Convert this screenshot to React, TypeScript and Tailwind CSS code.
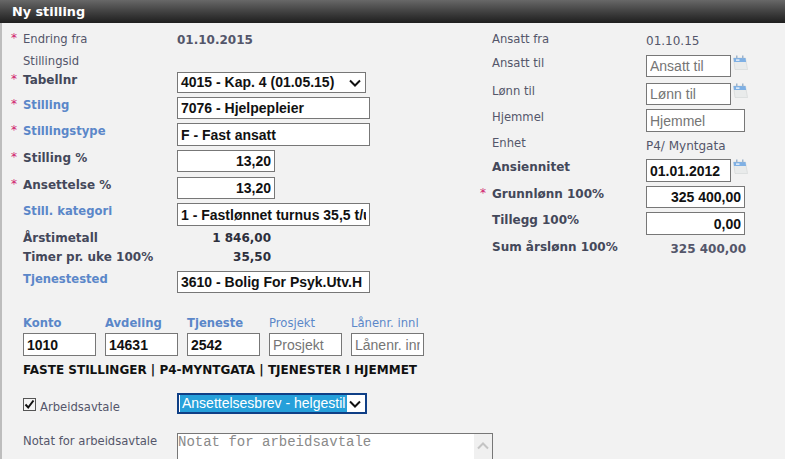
import type { ReactNode } from "react";

const verdana = "font-['DejaVu_Sans',sans-serif]";
const arial = "font-['Liberation_Sans',sans-serif]";
const fieldBase = `border border-[#777] bg-white text-[14px] text-[#111] outline-none placeholder:text-[#757575] ${arial}`;

function Star() {
  return <span className="w-[12px] shrink-0 text-[12px] leading-[14px] text-[#d0186c]">*</span>;
}

function Label({ children, tone = "plain", star = false }: { children: ReactNode; tone?: "plain" | "bold" | "link"; star?: boolean }) {
  const toneClass =
    tone === "link"
      ? "text-[11.6px] font-bold text-[#5b87c9]"
      : tone === "bold"
        ? "font-bold text-[#44485a]"
        : "text-[11.6px] text-[#54566a]";
  return (
    <div className="flex w-[166px] shrink-0 leading-[16px]">
      {star ? <Star /> : <span className="w-[12px] shrink-0" />}
      <span className={toneClass}>{children}</span>
    </div>
  );
}

function Row({ className, children }: { className: string; children: ReactNode }) {
  return <div className={`flex items-start ${className}`}>{children}</div>;
}

function Field({ value, placeholder, className = "", right = false, bold = true }: { value?: string; placeholder?: string; className?: string; right?: boolean; bold?: boolean }) {
  return (
    <input
      readOnly
      value={value ?? ""}
      placeholder={placeholder}
      className={`${fieldBase} px-[3px] ${bold ? "font-bold" : ""} ${right ? "text-right" : ""} ${className}`}
    />
  );
}

function CalendarIcon() {
  return (
    <svg width="15" height="16" viewBox="0 0 15 16" className="ml-[2px] shrink-0">
      <path d="M0.5 3h12l2 11.5H2z" fill="#e9ebeb" stroke="#d2d5d5" strokeWidth="0.6" />
      <path d="M0.5 3h12l0.6 4H1z" fill="#7fb0e4" />
      <rect x="3" y="4.5" width="3.5" height="1.2" fill="#ffffff" />
      <rect x="3" y="0.5" width="1.5" height="3" fill="#9db4cc" />
      <rect x="9" y="0.5" width="1.5" height="3" fill="#9db4cc" />
    </svg>
  );
}

function Chevron({ color = "#111" }: { color?: string }) {
  return (
    <svg width="12" height="8" viewBox="0 0 12 8" className="shrink-0">
      <path d="M1 1.5 6 6.5 11 1.5" fill="none" stroke={color} strokeWidth="2" />
    </svg>
  );
}

function CodeColumn({ label, value, tone }: { label: string; value?: string; tone: "bold" | "plain" }) {
  return (
    <div className="flex w-[73px] flex-col">
      <span className={`h-[16px] whitespace-nowrap text-[11.6px] leading-[16px] text-[#5b87c9] ${tone === "bold" ? "font-bold" : ""}`}>{label}</span>
      <Field value={value} placeholder={value ? undefined : label} bold={tone === "bold"} className="mt-[2px] h-[23px] w-[73px]" />
    </div>
  );
}

export default function App() {
  return (
    <div className={`h-[459px] w-[785px] overflow-hidden bg-[#f2f2f2] text-[12px] ${verdana}`}>
      <div className="flex h-[23px] items-center bg-gradient-to-b from-[#686868] to-[#1f1f1f] pl-[12px] text-[12.8px] font-bold text-white">
        Ny stilling
      </div>

      <div className="border-l-2 border-[#bdbdbd] pl-[9px]">
        <div className="flex">
          <div className="w-[469px] shrink-0">
            <Row className="h-[28px] pt-[8px]">
              <Label star>Endring fra</Label>
              <span className="pt-[1px] font-bold leading-[16px] text-[#54566a]">01.10.2015</span>
            </Row>
            <Row className="h-[21px] pt-[2px]">
              <Label>Stillingsid</Label>
            </Row>
            <Row className="h-[25px]">
              <Label tone="bold" star>Tabellnr</Label>
              <div className={`${fieldBase} flex h-[21px] w-[189px] items-center justify-between pl-[3px] pr-[4px] font-bold`}>
                <span>4015 - Kap. 4 (01.05.15)</span>
                <Chevron />
              </div>
            </Row>
            <Row className="h-[26px]">
              <Label tone="link" star>Stilling</Label>
              <Field value="7076 - Hjelpepleier" className="h-[22px] w-[193px]" />
            </Row>
            <Row className="h-[27px]">
              <Label tone="link" star>Stillingstype</Label>
              <Field value="F - Fast ansatt" className="h-[23px] w-[193px]" />
            </Row>
            <Row className="h-[27px]">
              <Label tone="bold" star>Stilling %</Label>
              <Field value="13,20" right className="h-[22px] w-[98px]" />
            </Row>
            <Row className="h-[26px]">
              <Label tone="bold" star>Ansettelse %</Label>
              <Field value="13,20" right className="h-[22px] w-[98px]" />
            </Row>
            <Row className="h-[26px]">
              <Label tone="link">Still. kategori</Label>
              <Field value="1 - Fastlønnet turnus 35,5 t/uke" className="h-[23px] w-[193px]" />
            </Row>
            <Row className="h-[20px] pt-[1px]">
              <Label tone="bold">Årstimetall</Label>
              <span className="w-[94px] text-right font-bold leading-[16px] text-[#2d2f3c]">1 846,00</span>
            </Row>
            <Row className="h-[22px]">
              <Label tone="bold">Timer pr. uke 100%</Label>
              <span className="w-[94px] text-right font-bold leading-[16px] text-[#2d2f3c]">35,50</span>
            </Row>
            <Row className="h-[22px]">
              <Label tone="link">Tjenestested</Label>
              <Field value="3610 - Bolig For Psyk.Utv.H" className="h-[22px] w-[193px]" />
            </Row>
          </div>

          <div className="pt-[8px]">
            <Row className="h-[24px]">
              <Label>Ansatt fra</Label>
              <span className="pt-[2px] leading-[16px] text-[#54566a]">01.10.15</span>
            </Row>
            <Row className="h-[28px]">
              <Label>Ansatt til</Label>
              <Field placeholder="Ansatt til" bold={false} className="h-[22px] w-[85px]" />
              <CalendarIcon />
            </Row>
            <Row className="h-[26px]">
              <Label>Lønn til</Label>
              <Field placeholder="Lønn til" bold={false} className="h-[22px] w-[85px]" />
              <CalendarIcon />
            </Row>
            <Row className="h-[26px]">
              <Label>Hjemmel</Label>
              <Field placeholder="Hjemmel" bold={false} className="h-[23px] w-[99px]" />
            </Row>
            <Row className="h-[24px]">
              <Label>Enhet</Label>
              <span className="pt-[3px] leading-[16px] text-[#54566a]">P4/ Myntgata</span>
            </Row>
            <Row className="h-[27px]">
              <Label tone="bold">Ansiennitet</Label>
              <Field value="01.01.2012" className="h-[23px] w-[85px]" />
              <CalendarIcon />
            </Row>
            <Row className="h-[26px]">
              <Label tone="bold" star>Grunnlønn 100%</Label>
              <Field value="325 400,00" right className="h-[22px] w-[99px]" />
            </Row>
            <Row className="h-[27px]">
              <Label tone="bold">Tillegg 100%</Label>
              <Field value="0,00" right className="h-[23px] w-[99px]" />
            </Row>
            <Row className="h-[20px]">
              <Label tone="bold">Sum årslønn 100%</Label>
              <span className="w-[100px] pt-[2px] text-right font-bold leading-[16px] text-[#54566a]">325 400,00</span>
            </Row>
          </div>
        </div>

        <div className="ml-[12px] mt-[22px]">
          <div className="flex gap-[9px]">
            <CodeColumn label="Konto" value="1010" tone="bold" />
            <CodeColumn label="Avdeling" value="14631" tone="bold" />
            <CodeColumn label="Tjeneste" value="2542" tone="bold" />
            <CodeColumn label="Prosjekt" tone="plain" />
            <CodeColumn label="Lånenr. innl" tone="plain" />
          </div>
          <div className="mt-[6px] font-bold leading-[16px] text-[#111]">FASTE STILLINGER | P4-MYNTGATA | TJENESTER I HJEMMET</div>

          <div className="mt-[15px] flex h-[40px] items-start">
            <div className="flex w-[154px] items-start pt-[5px]">
              <span className="flex h-[13px] w-[13px] items-center justify-center border border-[#555] bg-[#f4f4f4]">
                <svg width="11" height="11" viewBox="0 0 11 11">
                  <path d="M1.5 5.5 4.2 8.5 9.5 1.5" fill="none" stroke="#111" strokeWidth="2" />
                </svg>
              </span>
              <span className="ml-[4px] mt-[1px] text-[11.6px] leading-[16px] text-[#54566a]">Arbeidsavtale</span>
            </div>
            <div className={`${arial} flex h-[21px] w-[190px] items-center justify-between border-2 border-[#0f3f86] bg-white pl-[1px] pr-[4px] text-[14px]`}>
              <span className="bg-[#26a0da] px-[2px] leading-[17px] text-white">Ansettelsesbrev - helgestil</span>
              <Chevron />
            </div>
          </div>

          <div className="flex items-start">
            <span className="w-[154px] text-[11.6px] leading-[16px] text-[#54566a]">Notat for arbeidsavtale</span>
            <div className="flex h-[60px] w-[316px] border border-[#777] bg-white">
              <span className="flex-1 font-['Liberation_Mono',monospace] text-[14px] leading-[16px] text-[#8a8a8a]">Notat for arbeidsavtale</span>
              <div className="flex w-[18px] justify-center bg-[#f0f0f0] pt-[8px]">
                <svg width="12" height="8" viewBox="0 0 12 8" className="shrink-0">
                  <path d="M1 6.5 6 1.5 11 6.5" fill="none" stroke="#c4c4c4" strokeWidth="2" />
                </svg>
              </div>
            </div>
          </div>
        </div>
      </div>
    </div>
  );
}
